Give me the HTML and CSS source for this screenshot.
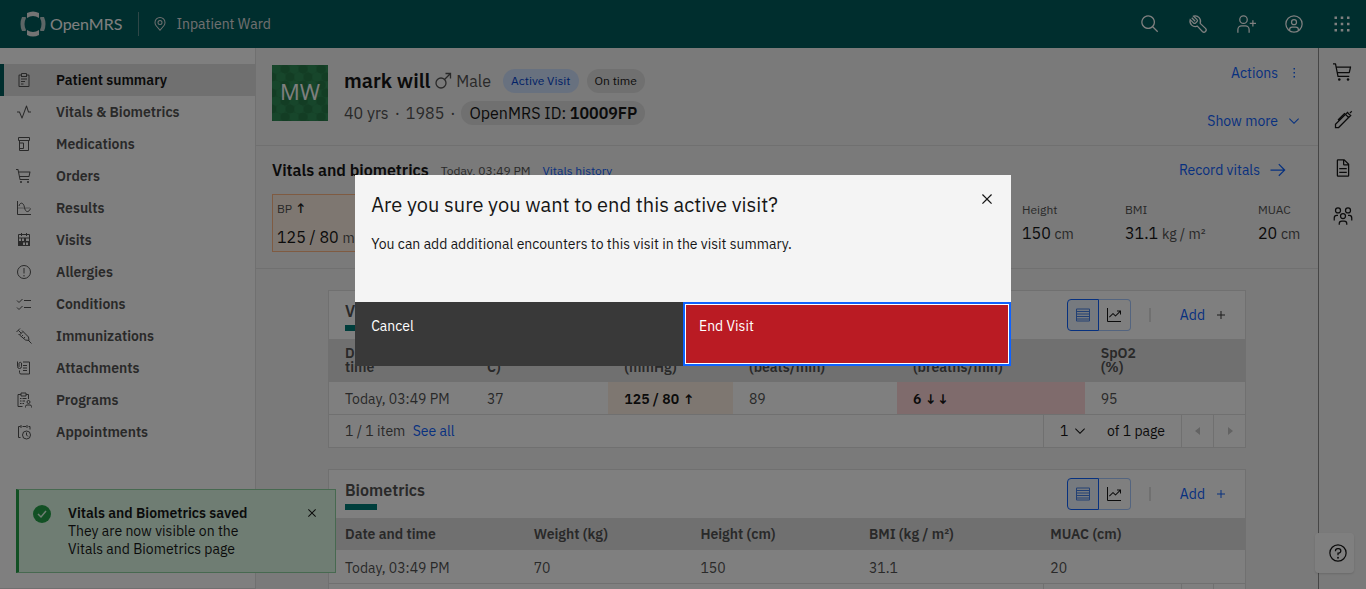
FILE: index.html
```html
<!DOCTYPE html>
<html lang="en">
<head>
<meta charset="utf-8">
<meta name="viewport" content="width=device-width, initial-scale=1">
<title>OpenMRS - Patient summary</title>
<link rel="stylesheet" href="styles.css">
</head>
<body>
<svg class="sprite" aria-hidden="true">
  <symbol id="cart" viewBox="0 0 32 32"><circle cx="10" cy="28" r="2"/><circle cx="24" cy="28" r="2"/><path d="M28 7H5.820L5 2.800A1 1 0 0 0 4 2H0v2h3.180L7 23.200a1 1 0 0 0 1 .8h18v-2H8.820L8 18h18a1 1 0 0 0 1-.78l2-9A1 1 0 0 0 28 7Zm-2.800 9H7.620L6.220 9h20.530Z"/></symbol>
  <symbol id="close" viewBox="0 0 32 32"><path d="M24 9.4 22.6 8 16 14.6 9.4 8 8 9.4 14.6 16 8 22.6 9.4 24 16 17.4 22.6 24 24 22.6 17.4 16z"/></symbol>
  <symbol id="chevron" viewBox="0 0 32 32"><path d="M16 22 6 12l1.4-1.4 8.6 8.6 8.6-8.6L26 12z"/></symbol>
  <symbol id="add" viewBox="0 0 32 32"><path d="M17 15V8h-2v7H8v2h7v7h2v-7h7v-2z"/></symbol>
  <symbol id="rows" viewBox="0 0 32 32"><path d="M4 3h24a2 2 0 0 1 2 2v22a2 2 0 0 1-2 2H4a2 2 0 0 1-2-2V5a2 2 0 0 1 2-2Zm0 2v3h24V5Zm0 5v3h24v-3Zm0 5v3h24v-3Zm0 5v3h24v-3Zm0 5v2h24v-2Z"/></symbol>
  <symbol id="trend" viewBox="0 0 32 32"><path d="M4 2H2v26a2 2 0 0 0 2 2h26v-2H4ZM30 9V7h-8v2h4.6L19 16.6l-4.3-4.3a1 1 0 0 0-1.4 0L6 19.6 7.4 21l6.6-6.6 4.3 4.3a1 1 0 0 0 1.4 0L28 10.4V15h2Z" /></symbol>
</svg>

<header class="topbar">
  <a class="brand" href="#" aria-label="OpenMRS home">
    <svg class="brand-mark" viewBox="0 0 26 26" aria-hidden="true"><path d="M7 2Q13-1 19 2v5Q13 3 7 7ZM7 24q6 3 12 0v-5q-6 4-12 0Z"/><path opacity=".8" d="M5 6H2Q-1 13 2 20h3q1 0 1-1Q3 13 6 7 6 6 5 6Zm16 0h3q3 7 0 14h-3q-1 0-1-1 3-6 0-12 0-1 1-1Z"/></svg>
    <span>OpenMRS</span>
  </a>
  <div class="location">
    <svg class="i16" viewBox="0 0 32 32" aria-hidden="true"><path d="M16 18a5 5 0 1 1 5-5 5 5 0 0 1-5 5Zm0-8a3 3 0 1 0 3 3 3 3 0 0 0-3-3Z"/><path d="m16 30-8.4-9.9-.4-.5A10.900 10.900 0 0 1 5 13a11 11 0 0 1 22 0 10.900 10.900 0 0 1-2.200 6.600l-.4.5ZM8.800 18.400l.3.4L16 26.900l6.900-8.150.3-.35A8.900 8.900 0 0 0 25 13a9 9 0 1 0-18 0 8.900 8.900 0 0 0 1.800 5.400Z"/></svg>
    <span>Inpatient Ward</span>
  </div>
  <div class="top-actions">
    <button type="button" aria-label="Search"><svg class="i20" viewBox="0 0 32 32"><path d="m29 27.600-7.550-7.550a11 11 0 1 0-1.400 1.400L27.600 29ZM4 13a9 9 0 1 1 9 9 9 9 0 0 1-9-9Z"/></svg></button>
    <button type="button" aria-label="Tools"><svg class="i20 line" viewBox="0 0 32 32"><path d="M9 3.500 14.500 9a2 2 0 0 1 0 3L12 14.500a2 2 0 0 1-3 0L3.500 9C1.500 16 8 22 15 19.500l8 8.500a3.500 3.500 0 0 0 5-5l-8.500-8C22 8 16 1.500 9 3.500ZM6 6l5.500 5.500"/></svg></button>
    <button type="button" aria-label="Add patient"><svg class="i20" viewBox="0 0 32 32"><path d="M32 14h-4v-4h-2v4h-4v2h4v4h2v-4h4ZM12 4a5 5 0 1 1-5 5 5 5 0 0 1 5-5m0-2a7 7 0 1 0 7 7 7 7 0 0 0-7-7ZM22 30h-2v-5a5 5 0 0 0-5-5H9a5 5 0 0 0-5 5v5H2v-5a7 7 0 0 1 7-7h6a7 7 0 0 1 7 7Z"/></svg></button>
    <button type="button" aria-label="My account"><svg class="i20" viewBox="0 0 32 32"><path d="M16 8a5 5 0 1 0 5 5 5 5 0 0 0-5-5Zm0 8a3 3 0 1 1 3-3 3 3 0 0 1-3 3Z"/><path d="M16 2a14 14 0 1 0 14 14A14 14 0 0 0 16 2Zm-6 24.380V25a3 3 0 0 1 3-3h6a3 3 0 0 1 3 3v1.380a11.900 11.900 0 0 1-12 0Zm14-1.450A5 5 0 0 0 19 20h-6a5 5 0 0 0-5 4.930 12 12 0 1 1 16 0Z"/></svg></button>
    <button type="button" aria-label="App menu"><svg class="i20" viewBox="0 0 32 32"><path d="M4 4h4v4H4zm10 0h4v4h-4zm10 0h4v4h-4zM4 14h4v4H4zm10 0h4v4h-4zm10 0h4v4h-4zM4 24h4v4H4zm10 0h4v4h-4zm10 0h4v4h-4z"/></svg></button>
  </div>
</header>

<div class="shell">
  <nav class="sidenav" aria-label="Patient chart">
    <a class="active" href="#"><svg class="i16" viewBox="0 0 32 32"><path d="M10 18h8v2h-8zm0-5h12v2H10zm0 10h5v2h-5z"/><path d="M25 5h-3V4a2 2 0 0 0-2-2h-8a2 2 0 0 0-2 2v1H7a2 2 0 0 0-2 2v21a2 2 0 0 0 2 2h18a2 2 0 0 0 2-2V7a2 2 0 0 0-2-2ZM12 4h8v4h-8Zm13 24H7V7h3v3h12V7h3Z"/></svg>Patient summary</a>
    <a href="#"><svg class="i16" viewBox="0 0 32 32"><path d="M12 29a1 1 0 0 1-.92-.62L6.330 17H2v-2h5a1 1 0 0 1 .92.620L12 25.280 20.060 3.650A1 1 0 0 1 21 3a1 1 0 0 1 .93.680L25.720 15H30v2h-5a1 1 0 0 1-.95-.680L21 7l-8.060 21.350A1 1 0 0 1 12 29Z"/></svg>Vitals &amp; Biometrics</a>
    <a href="#"><svg class="i16 line" viewBox="0 0 32 32"><path d="M5 3h22v6H5ZM7 9v20h18V9M7 14h8v11H7"/></svg>Medications</a>
    <a href="#"><svg class="i16"><use href="#cart"/></svg>Orders</a>
    <a href="#"><svg class="i16 line" viewBox="0 0 32 32"><path d="M3 2v27h27M6 12c2-8 9-8 11 3s9 10 12 2"/><path d="M5 16h24" stroke-dasharray="2 2"/></svg>Results</a>
    <a href="#"><svg class="i16" viewBox="0 0 32 32"><path fill-rule="evenodd" d="M26 4h-4V2h-2v2h-8V2h-2v2H6a2 2 0 0 0-2 2v22h24V6a2 2 0 0 0-2-2ZM6 6h4v2h2V6h8v2h2V6h4v5H6Zm0 7h4v5H6Zm6 0h4v5h-4Zm8 0h6v5h-6ZM14 21h4v5h-4Zm6 0h4v5h-4Z"/></svg>Visits</a>
    <a href="#"><svg class="i16 line" viewBox="0 0 32 32"><circle cx="16" cy="16" r="13"/><path d="M16 8v11M16 22v3"/></svg>Allergies</a>
    <a href="#"><svg class="i16 line" viewBox="0 0 32 32"><path d="M16 9h14M16 23h14M2 9l4 4 7-7M2 23l4 4 7-7"/></svg>Conditions</a>
    <a href="#"><svg class="i16 line" viewBox="0 0 32 32"><path d="m1 8 7-7M4.500 4.500l6 6M7 14l7-7 11 11 1 7-7-1ZM24 24l7 7M5 12l2 2M12 5l2 2M14 14l-3 3M18 18l-3 3"/></svg>Immunizations</a>
    <a href="#"><svg class="i16 line" viewBox="0 0 32 32"><path d="M3 3v10a4 4 0 0 0 8 0V6a3 3 0 0 0-5 0v8M14 4h13v24H10a3 3 0 0 1-3-3v-4M14 11h8M14 16h8M14 21h8"/></svg>Attachments</a>
    <a href="#"><svg class="i16 line" viewBox="0 0 32 32"><path d="M10 5H4v24h9M20 5h5v9M10 2h10v6H10ZM8 13h3M8 18h3M8 23h3M13 13h8M13 18h5M13 23h3"/><circle cx="25" cy="20" r="3"/><path d="M19 31v-2a3 3 0 0 1 3-3h6a3 3 0 0 1 3 3v2"/></svg>Programs</a>
    <a href="#"><svg class="i16 line" viewBox="0 0 32 32"><path d="M9 5H5v22h4M13 5h7M25 5h3v6M10 2v6M22 2v6"/><circle cx="21" cy="22" r="8"/><path d="M21 17v5l3 3"/></svg>Appointments</a>
  </nav>

  <main class="chart">
    <section class="banner" aria-label="Patient banner">
      <svg class="avatar" viewBox="0 0 56 56" role="img" aria-label="MW">
        <defs><pattern id="dots" width="18" height="16" patternUnits="userSpaceOnUse"><circle cx="4" cy="4" r="4.500" fill="#2f8c57"/><circle cx="13" cy="4" r="4.500" fill="#277a49"/><circle cx="0" cy="12" r="4.500" fill="#277a49"/><circle cx="9" cy="12" r="4.500" fill="#2f8c57"/><circle cx="18" cy="12" r="4.500" fill="#277a49"/></pattern></defs>
        <path fill="#2b8450" d="M0 0h56v56H0z"/><path fill="url(#dots)" d="M0 0h56v56H0z"/>
        <text x="28" y="35" text-anchor="middle">MW</text>
      </svg>
      <div class="identity">
        <div class="id-row">
          <h1>mark will</h1>
          <span class="gender"><svg class="i20" viewBox="0 0 20 20"><g fill="none" stroke="currentColor" stroke-width="1.300"><circle cx="7" cy="12" r="5"/><path d="m10.500 8.500 6-6M11.500 2.500h5v5"/></g></svg>Male</span>
          <span class="tag tag-blue">Active Visit</span>
          <span class="tag">On time</span>
        </div>
        <div class="id-row id-details">
          <span>40 yrs</span><span>·</span><span>1985</span><span>·</span>
          <span class="tag tag-id">OpenMRS ID: <b>10009FP</b></span>
        </div>
      </div>
      <div class="banner-actions">
        <button type="button" class="link">Actions<svg class="i16" viewBox="0 0 32 32"><path d="M15 6h3v3h-3zm0 8h3v3h-3zm0 8h3v3h-3z"/></svg></button>
        <button type="button" class="link">Show more<svg class="i16"><use href="#chevron"/></svg></button>
      </div>
    </section>

    <section class="vitals">
      <div class="vitals-head">
        <h2>Vitals and biometrics</h2>
        <span class="stamp">Today, 03:49 PM</span>
        <a class="history" href="#">Vitals history</a>
        <button type="button" class="link record">Record vitals<svg class="i20" viewBox="0 0 32 32"><path d="m18 6-1.430 1.390L24.150 15H4v2h20.150l-7.580 7.570L18 26l10-10z"/></svg></button>
      </div>
      <div class="vitals-grid">
        <div class="vital flagged"><span>BP <b>↑</b></span><p>125 / 80 <small>mmHg</small></p></div>
        <div class="vital size-first"><span>Height</span><p>150 <small>cm</small></p></div>
        <div class="vital"><span>BMI</span><p>31.1 <small>kg / m²</small></p></div>
        <div class="vital"><span>MUAC</span><p>20 <small>cm</small></p></div>
      </div>
    </section>

    <div class="widgets">
      <section class="card">
        <div class="card-head">
          <h3>Vitals</h3>
          <div class="switch"><button type="button" class="on" aria-label="Table view"><svg class="i16"><use href="#rows"/></svg></button><button type="button" aria-label="Chart view"><svg class="i16"><use href="#trend"/></svg></button></div>
          <span class="rule"></span>
          <button type="button" class="link add">Add<svg class="i16 dark"><use href="#add"/></svg></button>
        </div>
        <table class="six">
          <thead><tr><th>Date and<br>time</th><th>Temp (DEG<br>C)</th><th>BP<br>(mmHg)</th><th>Heart rate<br>(beats/min)</th><th>R. rate<br>(breaths/min)</th><th>SpO2<br>(%)</th></tr></thead>
          <tbody><tr><td>Today, 03:49 PM</td><td>37</td><td class="high">125 / 80 ↑</td><td>89</td><td class="critical">6 ↓↓</td><td>95</td></tr></tbody>
        </table>
        <div class="pager">
          <span class="count">1 / 1 item <a href="#">See all</a></span>
          <div class="page-pick"><span class="select"><select aria-label="Page number"><option>1</option></select><svg class="i16"><use href="#chevron"/></svg></span><span>of 1 page</span></div>
          <button type="button" disabled aria-label="Previous page"><svg class="i16" viewBox="0 0 32 32"><path d="M20 24 10 16l10-8z"/></svg></button>
          <button type="button" disabled aria-label="Next page"><svg class="i16" viewBox="0 0 32 32"><path d="m12 8 10 8-10 8z"/></svg></button>
        </div>
      </section>

      <section class="card">
        <div class="card-head">
          <h3>Biometrics</h3>
          <div class="switch"><button type="button" class="on" aria-label="Table view"><svg class="i16"><use href="#rows"/></svg></button><button type="button" aria-label="Chart view"><svg class="i16"><use href="#trend"/></svg></button></div>
          <span class="rule"></span>
          <button type="button" class="link add">Add<svg class="i16"><use href="#add"/></svg></button>
        </div>
        <table class="five">
          <thead><tr><th>Date and time</th><th>Weight (kg)</th><th>Height (cm)</th><th>BMI (kg / m²)</th><th>MUAC (cm)</th></tr></thead>
          <tbody><tr><td>Today, 03:49 PM</td><td>70</td><td>150</td><td>31.1</td><td>20</td></tr></tbody>
        </table>
        <div class="pager">
          <span class="count">1 / 1 item <a href="#">See all</a></span>
          <div class="page-pick"><span class="select"><select aria-label="Page number"><option>1</option></select><svg class="i16"><use href="#chevron"/></svg></span><span>of 1 page</span></div>
          <button type="button" disabled aria-label="Previous page"><svg class="i16" viewBox="0 0 32 32"><path d="M20 24 10 16l10-8z"/></svg></button>
          <button type="button" disabled aria-label="Next page"><svg class="i16" viewBox="0 0 32 32"><path d="m12 8 10 8-10 8z"/></svg></button>
        </div>
      </section>
    </div>
  </main>

  <aside class="rail" aria-label="Workspace">
    <button type="button" aria-label="Order basket"><svg class="i20"><use href="#cart"/></svg></button>
    <button type="button" aria-label="Visit note"><svg class="i20 line" viewBox="0 0 32 32"><path d="M4 28v-5L20 7l5 5L9 28ZM20 7l4-4M25 12l4-4M23 4l5 5M27 5l3-3M8 16 19 5"/></svg></button>
    <button type="button" aria-label="Clinical forms"><svg class="i20" viewBox="0 0 32 32"><path d="m25.700 9.300-7-7A1 1 0 0 0 18 2H8a2 2 0 0 0-2 2v24a2 2 0 0 0 2 2h16a2 2 0 0 0 2-2V10a1 1 0 0 0-.3-.7ZM18 4.400l5.600 5.600H18ZM24 28H8V4h8v6a2 2 0 0 0 2 2h6ZM10 22h12v2H10zm0-6h12v2H10z"/></svg></button>
    <button type="button" aria-label="Patient lists"><svg class="i20" viewBox="0 0 32 32"><path d="M26 14h-2v2h2a3 3 0 0 1 3 3v4h2v-4a5 5 0 0 0-5-5ZM24 4a3 3 0 1 1-3 3 3 3 0 0 1 3-3m0-2a5 5 0 1 0 5 5 5 5 0 0 0-5-5ZM23 30h-2v-2a3 3 0 0 0-3-3h-4a3 3 0 0 0-3 3v2H9v-2a5 5 0 0 1 5-5h4a5 5 0 0 1 5 5ZM16 13a3 3 0 1 1-3 3 3 3 0 0 1 3-3m0-2a5 5 0 1 0 5 5 5 5 0 0 0-5-5ZM8 14H6a5 5 0 0 0-5 5v4h2v-4a3 3 0 0 1 3-3h2ZM8 4a3 3 0 1 1-3 3 3 3 0 0 1 3-3m0-2a5 5 0 1 0 5 5 5 5 0 0 0-5-5Z"/></svg></button>
  </aside>
</div>

<button type="button" class="help" aria-label="Help"><svg class="i20" viewBox="0 0 32 32"><path d="M16 2a14 14 0 1 0 14 14A14 14 0 0 0 16 2Zm0 26a12 12 0 1 1 12-12 12 12 0 0 1-12 12Z"/><circle cx="16" cy="23.500" r="1.500"/><path d="M17 8h-1.500a4.500 4.500 0 0 0-4.500 4.500v.5h2v-.5a2.500 2.500 0 0 1 2.500-2.500H17a2.500 2.500 0 0 1 0 5h-2v4.500h2V17a4.500 4.500 0 0 0 0-9Z"/></svg></button>

<div class="toast" role="status">
  <svg class="i20" viewBox="0 0 20 20"><circle cx="10" cy="10" r="9"/><path d="m6 10 3 3 5-6" fill="none" stroke="#defbe6" stroke-width="1.500"/></svg>
  <div class="toast-text"><strong>Vitals and Biometrics saved</strong><p>They are now visible on the Vitals and Biometrics page</p></div>
  <button type="button" aria-label="Close notification"><svg class="i16"><use href="#close"/></svg></button>
</div>

<div class="overlay">
  <div class="dialog" role="dialog" aria-modal="true" aria-labelledby="dialog-title">
    <div class="dialog-main">
      <div class="dialog-head">
        <h2 id="dialog-title">Are you sure you want to end this active visit?</h2>
        <button type="button" aria-label="Close"><svg class="i20"><use href="#close"/></svg></button>
      </div>
      <p>You can add additional encounters to this visit in the visit summary.</p>
    </div>
    <div class="dialog-actions">
      <button type="button" class="cancel">Cancel</button>
      <button type="button" class="danger">End Visit</button>
    </div>
  </div>
</div>
</body>
</html>
```

FILE: styles.css
```css
* { box-sizing: border-box; }
body {
  margin: 0;
  height: 100vh;
  overflow: hidden;
  display: flex;
  flex-direction: column;
  background: #f4f4f4;
  color: #161616;
  font: 14px/18px "IBM Plex Sans", Roboto, sans-serif;
}
h1, h2, h3, p { margin: 0; }
button, select { font: inherit; color: inherit; background: none; border: 0; padding: 0; margin: 0; border-radius: 0; cursor: pointer; }
button { display: flex; align-items: center; justify-content: center; }
a { color: #0f62fe; text-decoration: none; }
svg { fill: currentColor; flex: none; display: block; }
.sprite { position: absolute; width: 0; height: 0; }
.i16 { width: 16px; height: 16px; }
.i20 { width: 20px; height: 20px; }
.line { fill: none; stroke: currentColor; stroke-width: 2; }

.topbar { flex: none; height: 48px; display: flex; align-items: center; background: #005d5d; color: #fff; }
.brand { display: flex; align-items: center; gap: 4px; height: 24px; padding: 0 16px 0 20px; border-right: 1px solid #5c8f8f; color: #fff; font: 16px/24px Lato, sans-serif; }
.brand-mark { width: 26px; height: 26px; fill: #e8e8e8; }
.location { display: flex; align-items: center; gap: 8px; padding-left: 13px; color: #e0e0e0; }
.top-actions { display: flex; margin-left: auto; }
.top-actions button { width: 48px; height: 48px; }

.shell { flex: 1; min-height: 0; display: flex; }
.sidenav { flex: none; width: 256px; padding-top: 16px; background: #fff; border: solid #e0e0e0; border-width: 0 1px 1px 0; }
.sidenav a { display: flex; align-items: center; gap: 24px; height: 32px; padding-left: 16px; color: #525252; font-weight: 600; }
.sidenav .active { padding-left: 12px; background: #e0e0e0; border-left: 4px solid #005d5d; color: #161616; }
.sidenav .active svg { color: #525252; }

.chart { flex: 1; min-width: 0; overflow: hidden; }
.banner { display: flex; gap: 16px; height: 98px; padding: 17px 16px 0; border-bottom: 1px solid #e0e0e0; }
.avatar { width: 56px; height: 56px; }
.avatar text { fill: #fff; font: 22px "Open Sans", sans-serif; }
.identity { display: flex; flex-direction: column; gap: 8px; padding-top: 4px; }
.id-row { display: flex; align-items: center; gap: 8px; height: 24px; }
.id-row h1 { font-size: 20px; line-height: 24px; font-weight: 600; }
.gender { display: flex; align-items: center; gap: 2px; margin: 0 4px 0 -4px; color: #525252; font-size: 16px; }
.id-details { gap: 6px; color: #525252; font-size: 16px; }
.tag { height: 24px; padding: 0 8px; border-radius: 12px; background: #e0e0e0; color: #161616; font-size: 12px; line-height: 24px; }
.tag-blue { background: #d0e2ff; color: #0043ce; }
.tag-id { font-size: 16px; }
.tag b { font-weight: 600; }
.link { gap: 8px; color: #0f62fe; }
.banner-actions { display: flex; flex-direction: column; align-items: flex-end; gap: 32px; margin-left: auto; }
.banner-actions .link { height: 16px; }

.vitals { height: 123px; padding: 12px 16px 0; border-bottom: 1px solid #e0e0e0; }
.vitals-head { display: flex; align-items: center; height: 24px; margin-bottom: 12px; }
.vitals-head h2 { font-size: 16px; font-weight: 600; }
.stamp, .history { margin-left: 12px; padding-top: 2px; color: #525252; font-size: 12px; line-height: 20px; }
.history { color: #0f62fe; }
.record { margin: 0 14px 0 auto; }
.vitals-grid { display: grid; grid-template-columns: 140px 1fr 103px 133px 44px; }
.vital { padding: 6px 0; }
.size-first { grid-column: 3; }
.vital span { display: block; color: #525252; font-size: 12px; line-height: 20px; }
.vital b { color: #161616; font-size: 14px; font-weight: 500; }
.vital p { margin-top: 2px; font-size: 16px; line-height: 22px; white-space: nowrap; }
.vital small { color: #525252; font-size: 14px; }
.flagged { height: 58px; padding: 3px 4px; border: 1px solid #ffb784; background: #fcefe3; }
.flagged p { margin-top: 7px; }

.widgets { display: flex; flex-direction: column; gap: 21px; padding: 21px 72px; }
.card { background: #fff; border: 1px solid #e0e0e0; }
.card-head { display: flex; align-items: center; height: 48px; padding: 0 16px; }
.card-head h3 { align-self: flex-start; margin-right: auto; padding-top: 10px; color: #525252; font-size: 16px; line-height: 20px; font-weight: 600; }
.card-head h3::after { content: ""; display: block; width: 32px; height: 6px; margin-top: 4px; background: #007d79; }
.switch { display: flex; }
.switch button { width: 32px; height: 32px; border: 1px solid #a6c8ff; border-left: 0; border-radius: 0 4px 4px 0; }
.switch .on { border: 1px solid #0f62fe; border-radius: 4px 0 0 4px; background: #edf5ff; color: #4580e8; }
.rule { width: 2px; height: 14px; margin: 0 29px 0 18px; background: #e0e0e0; }
.dark { color: #393939; }
table { width: 100%; border-collapse: collapse; table-layout: fixed; }
th, td { padding: 0 16px; text-align: left; white-space: nowrap; }
th { height: 32px; background: #e0e0e0; color: #525252; line-height: 14px; font-weight: 600; }
.six th { height: 43px; padding-bottom: 2px; }
td { height: 32px; padding-top: 2px; color: #525252; }
.five td { height: 33px; }
.six th:nth-child(1) { width: 15.5%; }
.six th:nth-child(2) { width: 15%; }
.six th:nth-child(3) { width: 13.6%; }
.six th:nth-child(4) { width: 17.9%; }
.six th:nth-child(5) { width: 20.5%; }
.five th:nth-child(1) { width: 20.6%; }
.five th:nth-child(2) { width: 18.2%; }
.five th:nth-child(3) { width: 18.4%; }
.five th:nth-child(4) { width: 19.8%; }
td.high, td.critical { color: #161616; font-weight: 600; }
td.high { background: #fcefe3; }
td.critical { background: #ffd7d9; }
.pager { display: flex; height: 33px; border-top: 1px solid #e0e0e0; }
.count { flex: 1; padding-left: 16px; color: #525252; line-height: 32px; }
.count a { margin-left: 4px; }
.page-pick { display: flex; align-items: center; gap: 19px; padding: 0 16px; border-left: 1px solid #e0e0e0; }
.select { display: grid; align-items: center; width: 28px; }
.select select, .select svg { grid-area: 1 / 1; }
.select select { width: 28px; height: 32px; appearance: none; }
.select svg { justify-self: end; pointer-events: none; }
.pager button { width: 32px; border-left: 1px solid #e0e0e0; color: #c6c6c6; }

.rail { flex: none; width: 48px; border-left: 1px solid #8d8d8d; }
.rail button { width: 48px; height: 48px; }
.help { position: fixed; right: 12px; bottom: 16px; width: 39px; height: 40px; background: #fff; border-radius: 4px; box-shadow: 0 1px 2px #0002; }
.help svg { margin-left: 6px; }

.toast { position: fixed; left: 16px; bottom: 16px; display: flex; width: 320px; height: 84px; padding: 14px 15px 14px 13px; background: #defbe6; border: 1px solid #8fd3a1; border-left: 3px solid #24a148; }
.toast > svg { margin-right: 16px; color: #24a148; }
.toast-text { flex: 1; }
.toast-text strong { font-weight: 600; }
.toast-text p { width: 180px; }
.toast button { width: 16px; height: 18px; }

.overlay { position: fixed; inset: 0; display: flex; align-items: center; justify-content: center; padding-bottom: 48px; background: rgba(0, 0, 0, .5); }
.dialog { width: 48%; background: #f4f4f4; }
.dialog-main { padding: 16px 14px 48px 16px; }
.dialog-head { display: flex; align-items: flex-start; justify-content: space-between; }
.dialog-head h2 { font-size: 20px; line-height: 28px; font-weight: 400; }
.dialog-main p { margin-top: 16px; line-height: 19px; }
.dialog-head button { margin-top: -2px; }
.dialog-actions { display: flex; }
.dialog-actions button { flex: 1; align-items: flex-start; justify-content: flex-start; height: 64px; padding: 15px 16px; color: #fff; }
.cancel { background: #393939; }
.dialog-actions .danger { padding: 13px 14px; background: #ba1b23; border: 2px solid #0f62fe; box-shadow: inset 0 0 0 1px #fff; }
```
